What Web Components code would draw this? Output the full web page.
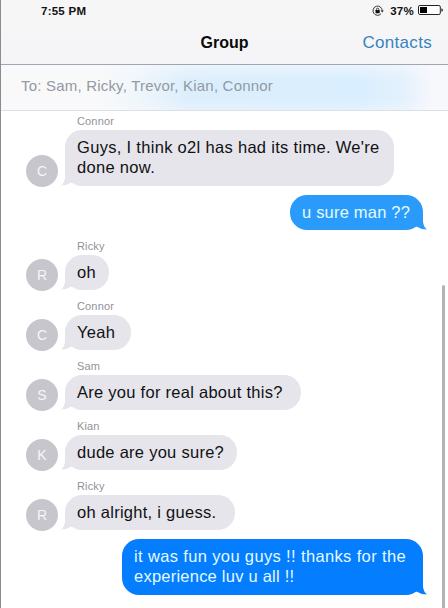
<!DOCTYPE html>
<html lang="en">
<head>
<meta charset="utf-8">
<title>Group</title>
<style>
    body {
        margin: 0;
        background: #ffffff;
        font-family: "Liberation Sans", Arial, sans-serif;
        color: #111114;
    }

    .tight {
        letter-spacing: 0.23px;
    }
</style>
</head>
<body>
<group-chat>
    <status-bar slot="top" time="7:55 PM" battery="37%"></status-bar>
    <chat-navbar slot="top" action="Contacts">Group</chat-navbar>
    <recipient-bar slot="top">To: Sam, Ricky, Trevor, Kian, Connor</recipient-bar>

    <chat-message from="Connor" style="--width: 329px; --height: 56px; --gap: 4px; --tracking: 0.31px">Guys, I think o2l has had its time. We're<br>done now.</chat-message>
    <chat-message sent style="--width: 133px; --gap: 9px; --fill: #2a9bfb; --tracking: 0.2px">u sure man ??</chat-message>
    <chat-message from="Ricky" style="--width: 44px">oh</chat-message>
    <chat-message from="Connor" style="--width: 66px">Yeah</chat-message>
    <chat-message from="Sam" style="--width: 236px">Are you for real about this?</chat-message>
    <chat-message from="Kian" style="--width: 172px">dude are you sure?</chat-message>
    <chat-message from="Ricky" style="--width: 170px">oh alright, i guess.</chat-message>
    <chat-message sent style="--width: 301px; --height: 56px; --gap: 9px; --fill: #047dff; --tracking: 0.36px">it was fun you guys !! thanks for the<br><span class="tight">experience luv u all !!</span></chat-message>
</group-chat>

<script>
class GroupChat extends HTMLElement {
    connectedCallback() {
        this.attachShadow({ mode: 'open' });
        this.shadowRoot.innerHTML = `
            <style>
                :host {
                    display: flex;
                    flex-direction: column;
                    position: relative;
                    box-sizing: border-box;
                    width: 448px;
                    height: 608px;
                    overflow: hidden;
                    border-left: 1px solid #8c8c8e;
                    background: #ffffff;
                }

                .messages {
                    display: flex;
                    flex-direction: column;
                }

                .scrollbar {
                    position: absolute;
                    top: 285px;
                    right: 3px;
                    bottom: 0;
                    width: 3px;
                    border-radius: 2px 2px 0 0;
                    background: #b3b3b5;
                }
            </style>

            <header><slot name="top"></slot></header>
            <div class="messages"><slot></slot></div>
            <div class="scrollbar"></div>
        `;
    }
}

class StatusBar extends HTMLElement {
    connectedCallback() {
        this.attachShadow({ mode: 'open' });
        this.shadowRoot.innerHTML = `
            <style>
                :host {
                    display: flex;
                    justify-content: space-between;
                    align-items: center;
                    box-sizing: border-box;
                    height: 22px;
                    padding: 0 5px 0 40px;
                    background: #f6f6f7;
                    font-size: 11.5px;
                    font-weight: 700;
                    letter-spacing: 0.25px;
                    color: #111111;
                }

                .right {
                    display: flex;
                    align-items: center;
                }

                .lock {
                    margin: 0 6px 1px 0;
                }

                .battery {
                    margin: 0 0 2px 4px;
                }

                svg {
                    display: block;
                }
            </style>

            <span>${this.getAttribute('time')}</span>
            <div class="right">
                <svg class="lock" width="12" height="12" viewBox="0 0 12 12">
                    <path d="M9 8.8A4.6 4.6 0 1 1 10.2 5.7" fill="none" stroke="#222" stroke-width="0.9"/>
                    <path d="M8.6 5.4h3.2L10.2 7.6z" fill="#222"/>
                    <path d="M4.4 5.5V4.4a1.2 1.2 0 0 1 2.4 0v1.1" fill="none" stroke="#111" stroke-width="0.8"/>
                    <rect x="3.5" y="5.1" width="4.2" height="3.1" rx="0.4" fill="#111"/>
                </svg>
                <span>${this.getAttribute('battery')}</span>
                <svg class="battery" width="25" height="10" viewBox="0 0 25 10">
                    <rect x="0.5" y="0.5" width="21.8" height="9" rx="1.4" fill="#fff" stroke="#222"/>
                    <rect x="2" y="2" width="7" height="6" fill="#000"/>
                    <path d="M23.4 3.2q1.5 .4 1.5 1.8t-1.5 1.8z" fill="#222"/>
                </svg>
            </div>
        `;
    }
}

class ChatNavbar extends HTMLElement {
    connectedCallback() {
        this.attachShadow({ mode: 'open' });
        this.shadowRoot.innerHTML = `
            <style>
                :host {
                    display: grid;
                    grid-template-columns: 1fr auto 1fr;
                    align-items: center;
                    box-sizing: border-box;
                    height: 43px;
                    padding: 0 16px 1px 16px;
                    border-bottom: 1px solid #a0a5b1;
                    background: linear-gradient(#f6f6f7, #f5f5f9);
                }

                .title {
                    grid-column: 2;
                    font-size: 16px;
                    font-weight: 700;
                    color: #0a0a0a;
                }

                .action {
                    justify-self: end;
                    font-size: 17px;
                    letter-spacing: 0.3px;
                    color: #3684bd;
                }
            </style>

            <span class="title"><slot></slot></span>
            <span class="action">${this.getAttribute('action')}</span>
        `;
    }
}

class RecipientBar extends HTMLElement {
    connectedCallback() {
        this.attachShadow({ mode: 'open' });
        this.shadowRoot.innerHTML = `
            <style>
                :host {
                    display: flex;
                    align-items: center;
                    box-sizing: border-box;
                    height: 46px;
                    padding: 0 20px 4px;
                    border-bottom: 1px solid #dcdfe3;
                    /* blue bubble showing through the translucent bar */
                    background:
                        linear-gradient(rgba(248, 250, 253, 0.5), transparent 35%, transparent 75%, rgba(248, 250, 253, 0.35)),
                        linear-gradient(90deg, #f9f9fa 22%, #f0f6fb 30%, #dceefc 42%, #d9eefe 80%, #e4f1fc 90%, #f7f8fc 97%);
                    font-size: 15px;
                    letter-spacing: 0.2px;
                    white-space: nowrap;
                    color: #929aa3;
                }
            </style>

            <span><slot></slot></span>
        `;
    }
}

class ChatMessage extends HTMLElement {
    connectedCallback() {
        const from = this.getAttribute('from');
        this.attachShadow({ mode: 'open' });
        this.shadowRoot.innerHTML = `
            <style>
                :host {
                    display: flex;
                    flex-direction: column;
                    margin-top: var(--gap, 10px);
                }

                .name {
                    height: 15px;
                    padding-left: 76px;
                    font-size: 11px;
                    line-height: 13px;
                    letter-spacing: 0.15px;
                    color: #929297;
                }

                .row {
                    display: flex;
                    align-items: flex-end;
                    padding-left: 25px;
                }

                :host([sent]) .row {
                    justify-content: flex-end;
                    padding: 0 25px 0 0;
                }

                .avatar {
                    display: flex;
                    align-items: center;
                    justify-content: center;
                    width: 32px;
                    height: 32px;
                    margin: 0 7px -1px 0;
                    border-radius: 50%;
                    background: #c7c6cc;
                    font-size: 14px;
                    color: #f6f6f8;
                }

                .bubble {
                    position: relative;
                    isolation: isolate;
                    box-sizing: border-box;
                    width: var(--width);
                    height: var(--height, 35px);
                    padding: 7px 0 0 12px;
                    border-radius: 17px;
                    background: var(--fill, #e6e5eb);
                    font-size: 16.5px;
                    line-height: 20px;
                    letter-spacing: var(--tracking, 0.27px);
                    white-space: nowrap;
                }

                :host([sent]) .bubble {
                    color: #e2fbff;
                }

                /* sits between the bubble's fill and its text */
                .tail {
                    position: absolute;
                    z-index: -1;
                    left: -4px;
                    bottom: 0;
                    fill: var(--fill, #e6e5eb);
                }

                :host([sent]) .tail {
                    left: auto;
                    right: -4px;
                    transform: scaleX(-1);
                }
            </style>

            ${from ? `<div class="name">${from}</div>` : ''}
            <div class="row">
                ${from ? `<div class="avatar">${from[0]}</div>` : ''}
                <div class="bubble">
                    <svg class="tail" width="16" height="17" viewBox="0 0 16 17">
                        <path d="M4 0V8Q4 13 0 16.6Q5.5 16.6 9.5 14L16 12V0z"/>
                    </svg>
                    <slot></slot>
                </div>
            </div>
        `;
    }
}

customElements.define('group-chat', GroupChat);
customElements.define('status-bar', StatusBar);
customElements.define('chat-navbar', ChatNavbar);
customElements.define('recipient-bar', RecipientBar);
customElements.define('chat-message', ChatMessage);
</script>
</body>
</html>
